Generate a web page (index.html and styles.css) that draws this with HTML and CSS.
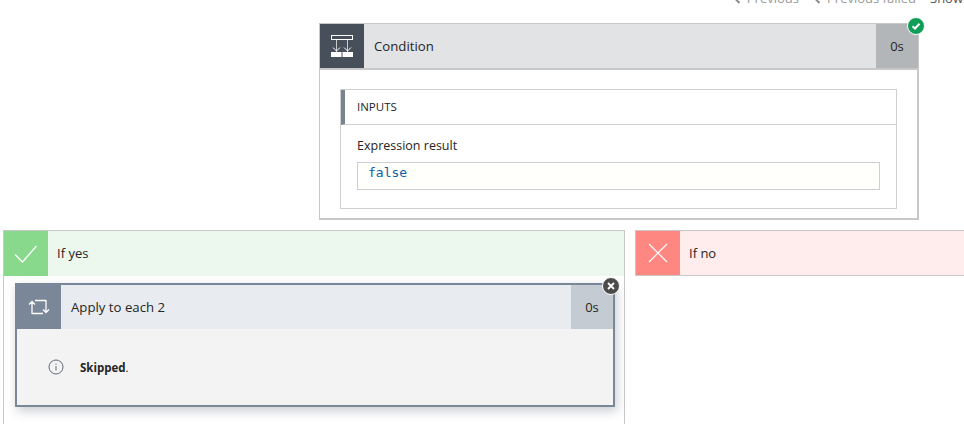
FILE: index.html

```html
<!DOCTYPE html>
<html lang="en">
<head>
  <meta charset="UTF-8">
  <title>Run details</title>
  <link rel="stylesheet" href="styles.css">
</head>
<body>
  <div class="pager">
    <span class="pager-link"><svg class="chev" width="8" height="12" viewBox="0 0 8 12"><path d="M6.5 1 1.5 6l5 5" fill="none" stroke="#8a8a8a" stroke-width="2"/></svg>Previous</span>
    <span class="pager-link"><svg class="chev" width="8" height="12" viewBox="0 0 8 12"><path d="M6.5 1 1.5 6l5 5" fill="none" stroke="#8a8a8a" stroke-width="2"/></svg>Previous failed</span>
    <span class="pager-show">Show</span>
  </div>

  <div class="card card-condition">
    <div class="card-head">
      <div class="card-icon">
        <svg width="24" height="24" viewBox="0 0 24 24" fill="none" stroke="#fff">
          <rect x="1.500" y="1.500" width="21" height="4"/>
          <path d="M6.500 6v12M17.500 6v12" stroke="#c9ccd1"/>
          <path d="M3 13.500l3.500 3.500 3.500-3.500M14 13.500l3.500 3.500 3.500-3.500"/>
          <rect x="1" y="18" width="10.500" height="5" fill="#fff" stroke="none"/>
          <rect x="12.500" y="18" width="10.500" height="5" fill="#fff" stroke="none"/>
        </svg>
      </div>
      <div class="card-title">Condition</div>
      <div class="card-time">0s</div>
    </div>
    <div class="card-body">
      <div class="inputs">
        <div class="inputs-head">INPUTS</div>
        <div class="inputs-body">
          <div class="field-label">Expression result</div>
          <div class="field-value">false</div>
        </div>
      </div>
    </div>
    <div class="badge badge-ok">
      <svg width="10" height="10" viewBox="0 0 10 10"><path d="M1.500 5.200 4 7.500 8.500 2.800" fill="none" stroke="#fff" stroke-width="2"/></svg>
    </div>
  </div>

  <div class="branches">
    <div class="branch branch-yes">
      <div class="branch-head">
        <div class="branch-icon">
          <svg width="24" height="20" viewBox="0 0 24 20"><path d="M1 10.500 8.500 18 22.500 2" fill="none" stroke="#fff" stroke-width="1.300"/></svg>
        </div>
        <div class="branch-title">If yes</div>
      </div>
      <div class="card card-loop">
        <div class="card-head">
          <div class="card-icon">
            <svg width="22" height="18" viewBox="0 0 22 18" fill="none" stroke="#fff" stroke-width="1.300">
              <path d="M4 16V3.500M1 6.500l3-3 3 3M4 15.500h11M18 2v12.500M15 11.500l3 3 3-3M18 2.500H7"/>
            </svg>
          </div>
          <div class="card-title">Apply to each 2</div>
          <div class="card-time">0s</div>
        </div>
        <div class="loop-body">
          <svg width="16" height="16" viewBox="0 0 16 16">
            <circle cx="8" cy="8" r="7" fill="none" stroke="#5f6b7a"/>
            <path d="M8 7v4.500M8 4.500v1.200" stroke="#5f6b7a"/>
          </svg>
          <span class="skipped"><b>Skipped</b>.</span>
        </div>
        <div class="badge badge-skip">
          <svg width="8" height="8" viewBox="0 0 8 8"><path d="M1 1l6 6M7 1 1 7" stroke="#fff" stroke-width="1.800"/></svg>
        </div>
      </div>
    </div>
    <div class="branch branch-no">
      <div class="branch-head">
        <div class="branch-icon">
          <svg width="20" height="20" viewBox="0 0 20 20"><path d="M1 1l18 18M19 1 1 19" stroke="#fff" stroke-width="1.200"/></svg>
        </div>
        <div class="branch-title">If no</div>
      </div>
    </div>
  </div>
</body>
</html>
```

FILE: styles.css

```css
html, body {
  height: 424px;
  overflow: hidden;
}
body {
  margin: 0;
  background: #fff;
  font-family: "Open Sans", "Noto Sans", sans-serif;
  font-size: 13px;
  color: #252525;
}
.pager {
  display: flex;
  justify-content: flex-end;
  align-items: center;
  gap: 14px;
  height: 14px;
  margin-top: -9px;
  margin-bottom: 18px;
  font-size: 13px;
  color: #9a9a9a;
  white-space: nowrap;
  overflow: hidden;
}
.pager-link {
  display: flex;
  align-items: center;
  gap: 6px;
}
.pager-show {
  color: #555;
  width: 34px;
}
.card {
  position: relative;
  box-sizing: border-box;
  width: 600px;
  border: 2px solid #c8c8c8;
}
.card-condition {
  margin-left: 319px;
  height: 197px;
  border-top-width: 1px;
  border-left-width: 1px;
}
.card-condition .card-head {
  margin-right: -1px;
}
.card-head {
  display: flex;
  height: 44px;
  align-items: stretch;
  background: #e2e3e5;
}
.card-icon {
  width: 44px;
  flex: none;
  display: flex;
  align-items: center;
  justify-content: center;
  background: #474f5b;
}
.card-title {
  flex: 1;
  padding-left: 10px;
  line-height: 44px;
  font-size: 13.200px;
}
.card-time {
  width: 42px;
  flex: none;
  text-align: center;
  line-height: 44px;
  background: #b2b6b9;
}
.card-body {
  border-top: 2px solid #c8c8c8;
  padding: 19px 20px 9px 20px;
}
.inputs {
  border: 1px solid #cfcfcf;
  height: 118px;
}
.inputs-head {
  height: 34px;
  line-height: 34px;
  padding-left: 12px;
  font-size: 11.500px;
  border-left: 4px solid #7a8390;
  border-bottom: 1px solid #cfcfcf;
}
.inputs-body {
  padding: 12px 16px 0 16px;
}
.field-label {
  line-height: 18px;
  font-size: 12.500px;
}
.field-value {
  margin-top: 7px;
  height: 26px;
  line-height: 20px;
  padding-left: 10px;
  border: 1px solid #cfcfcf;
  background: #fffffb;
  font-family: "DejaVu Sans Mono", monospace;
  font-size: 13px;
  color: #0f5fa8;
}
.badge {
  position: absolute;
  box-sizing: border-box;
  width: 18px;
  height: 18px;
  border-radius: 50%;
  border: 1px solid #fff;
  display: flex;
  align-items: center;
  justify-content: center;
}
.badge-ok {
  top: -7px;
  right: -8px;
  background: #0f9d58;
}
.badge-skip {
  top: -8px;
  right: -7px;
  background: #4b4b4b;
}
.branches {
  display: flex;
  gap: 10px;
  margin-top: 10px;
  margin-left: 3px;
}
.branch {
  flex: none;
  box-sizing: border-box;
  border: 1px solid #c8c8c8;
}
.branch-yes {
  width: 622px;
  height: 194px;
  border-bottom: 0;
}
.branch-no {
  width: 340px;
  height: 46px;
}
.branch-head {
  display: flex;
  height: 45px;
}
.branch-yes .branch-head {
  background: #ecf7ee;
}
.branch-no .branch-head {
  height: 44px;
  background: #ffecec;
}
.branch-icon {
  width: 44px;
  flex: none;
  display: flex;
  align-items: center;
  justify-content: center;
}
.branch-yes .branch-icon {
  background: #89d98d;
}
.branch-no .branch-icon {
  background: #ff8782;
}
.branch-title {
  padding-left: 9px;
  line-height: 44px;
}
.card-loop {
  margin: 7px 0 0 11px;
  height: 124px;
  border-color: #7a8798;
  box-shadow: 2px 4px 10px rgba(80, 90, 105, 0.3);
}
.card-loop .card-head {
  background: #e8ebef;
}
.card-loop .card-icon {
  background: #7a8798;
}
.card-loop .card-time {
  background: #c4cbd2;
}
.loop-body {
  display: flex;
  align-items: center;
  height: 76px;
  padding-left: 31px;
  background: #f3f3f3;
}
.skipped {
  margin-left: 16px;
  font-size: 11.500px;
}
```
